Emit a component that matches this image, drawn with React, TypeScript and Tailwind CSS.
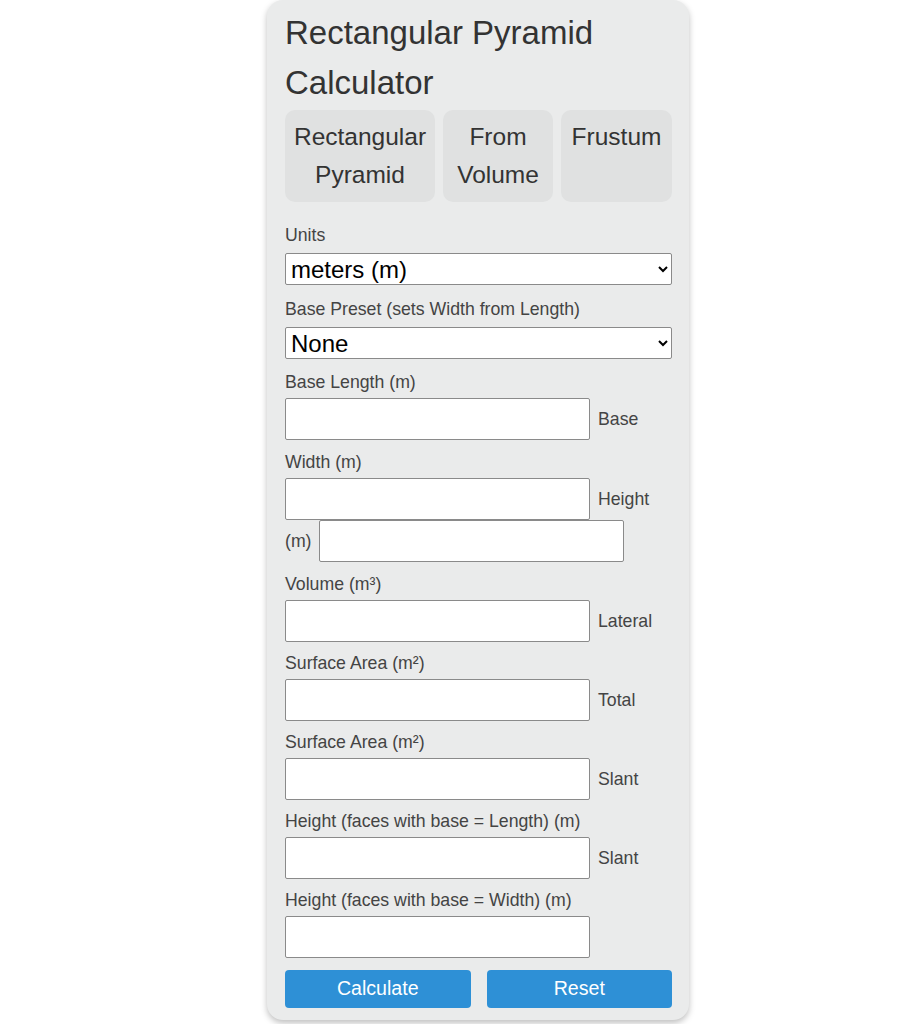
import React from 'react';

const fieldLabel = 'block text-[17.7px] leading-[20px] text-[#444]';
const inputBox = 'w-[305px] h-[42px] bg-white border border-[#8a8a8a] rounded-[2px] shrink-0';
const sideText = 'text-[17.7px] leading-[20px] text-[#444] ml-[8px]';
const tab = 'h-[92px] bg-[#e0e1e1] rounded-[10px] pt-[8px] text-[24.5px] leading-[38px] text-[#333] text-center flex flex-col items-center justify-start';

const Field = ({ label, side, top = 'mt-[11px]' }: { label: string; side?: string; top?: string }) => (
  <div className={top}>
    <label className={fieldLabel}>{label}</label>
    <div className="flex items-center mt-[6px]">
      <input type="text" className={inputBox} />
      {side && <span className={sideText}>{side}</span>}
    </div>
  </div>
);

const App = () => {
  return (
    <div className="min-h-[1024px] bg-white font-['Liberation_Sans',Arial,sans-serif]">
      <div className="ml-[267px] w-[422px] bg-[#eaebeb] rounded-2xl shadow-[0_3px_6px_rgba(0,0,0,0.25)] pl-[18px] pr-[17px] pt-[8px] pb-[12px]">

        {/* Title */}
        <h1 className="text-[33px] leading-[50px] text-[#333] font-normal">Rectangular Pyramid Calculator</h1>

        {/* Tabs */}
        <div className="flex gap-2 mt-[2px]">
          <button className={`${tab} w-[150px]`}>
            <span>Rectangular</span>
            <span>Pyramid</span>
          </button>
          <button className={`${tab} w-[110px]`}>
            <span>From</span>
            <span>Volume</span>
          </button>
          <button className={`${tab} w-[111px]`}>
            <span>Frustum</span>
          </button>
        </div>

        {/* Selects */}
        <label className={`${fieldLabel} mt-[23px]`}>Units</label>
        <select className="mt-[8px] w-full h-[32px] bg-white border border-[#8a8a8a] rounded-[2px] pl-[1px] text-[24px] text-black">
          <option>meters (m)</option>
        </select>

        <label className={`${fieldLabel} mt-[14px]`}>Base Preset (sets Width from Length)</label>
        <select className="mt-[8px] w-full h-[32px] bg-white border border-[#8a8a8a] rounded-[2px] pl-[1px] text-[24px] text-black">
          <option>None</option>
        </select>

        <Field label="Base Length (m)" side="Base" top="mt-[13px]" />

        {/* Width + Height (wrapped) */}
        <div className="mt-[12px]">
          <label className={fieldLabel}>Width (m)</label>
          <div className="flex items-center mt-[6px]">
            <input type="text" className={inputBox} />
            <span className={sideText}>Height</span>
          </div>
          <div className="flex items-center">
            <span className="text-[17.7px] leading-[20px] text-[#444] mr-[7px]">(m)</span>
            <input type="text" className={inputBox} />
          </div>
        </div>

        <Field label="Volume (m³)" side="Lateral" top="mt-[12px]" />
        <Field label="Surface Area (m²)" side="Total" />
        <Field label="Surface Area (m²)" side="Slant" />
        <Field label="Height (faces with base = Length) (m)" side="Slant" />
        <Field label="Height (faces with base = Width) (m)" />

        {/* Actions */}
        <div className="flex gap-4 mt-[12px]">
          <button className="flex-1 h-[38px] bg-[#2e90d6] rounded-[4px] text-white text-[19.6px]">Calculate</button>
          <button className="flex-1 h-[38px] bg-[#2e90d6] rounded-[4px] text-white text-[19.6px]">Reset</button>
        </div>
      </div>
    </div>
  );
};

export default App;
